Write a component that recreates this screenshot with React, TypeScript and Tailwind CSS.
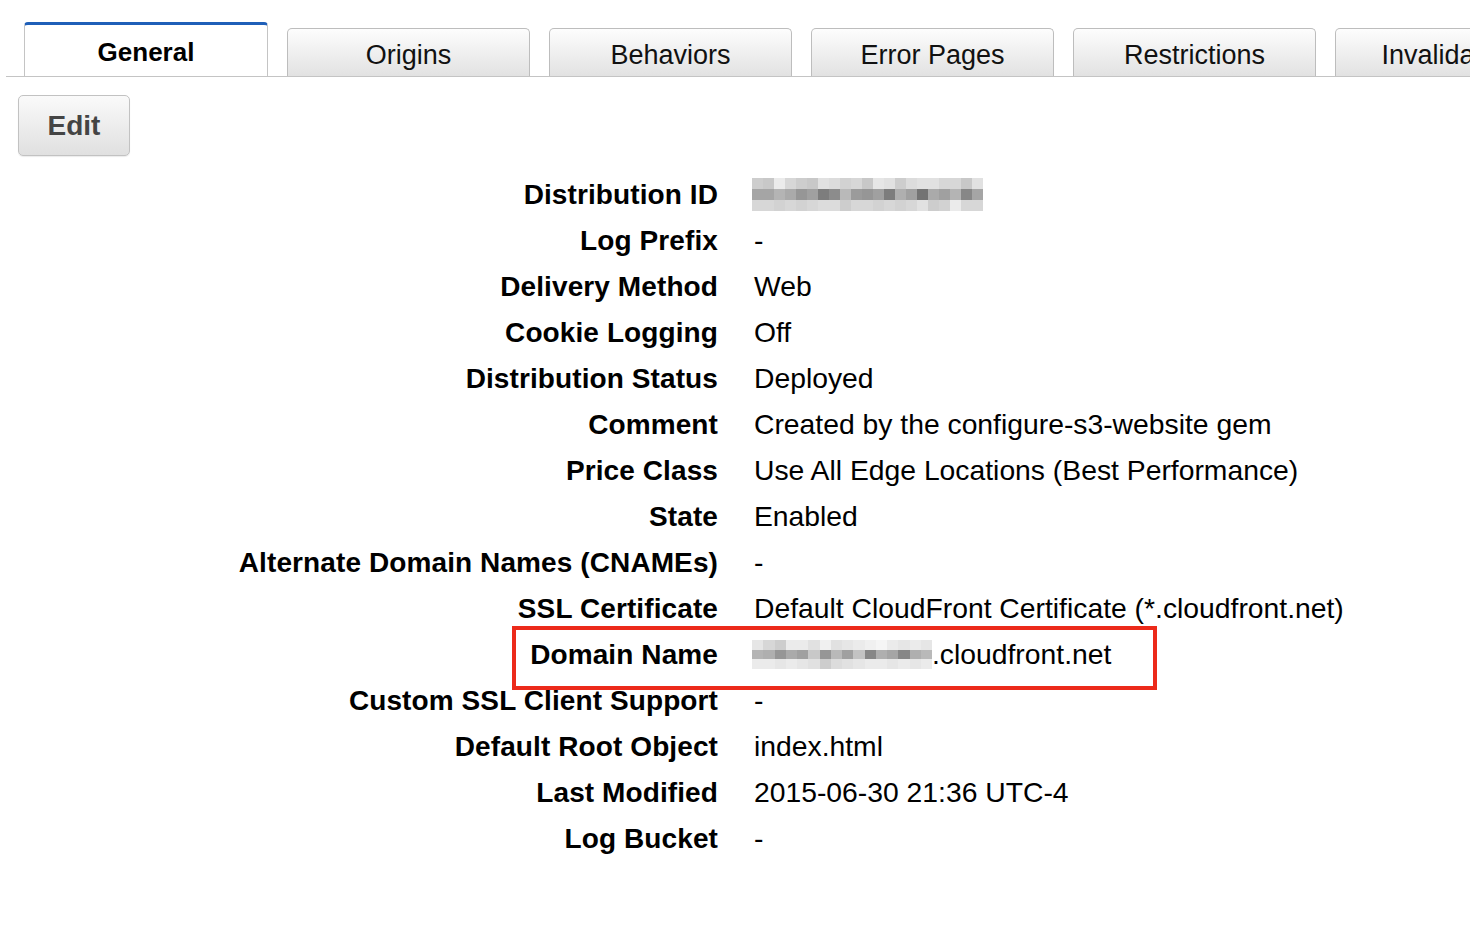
import React from "react";

const tabs = ["Origins", "Behaviors", "Error Pages", "Restrictions", "Invalidations"];

const rows: { label: string; value: string; highlight?: boolean }[] = [
  { label: "Distribution ID", value: "blurId" },
  { label: "Log Prefix", value: "-" },
  { label: "Delivery Method", value: "Web" },
  { label: "Cookie Logging", value: "Off" },
  { label: "Distribution Status", value: "Deployed" },
  { label: "Comment", value: "Created by the configure-s3-website gem" },
  { label: "Price Class", value: "Use All Edge Locations (Best Performance)" },
  { label: "State", value: "Enabled" },
  { label: "Alternate Domain Names (CNAMEs)", value: "-" },
  { label: "SSL Certificate", value: "Default CloudFront Certificate (*.cloudfront.net)" },
  { label: "Domain Name", value: "domain", highlight: true },
  { label: "Custom SSL Client Support", value: "-" },
  { label: "Default Root Object", value: "index.html" },
  { label: "Last Modified", value: "2015-06-30 21:36 UTC-4" },
  { label: "Log Bucket", value: "-" },
];

// pixelated blur, rows of gray levels
const idShades = [
  [205, 200, 235, 215, 205, 200, 225, 220, 210, 215, 200, 230, 225, 205, 220, 225, 225, 215, 215, 200, 225],
  [165, 165, 180, 170, 150, 160, 125, 140, 185, 155, 150, 160, 125, 175, 160, 115, 170, 160, 180, 135, 165],
  [215, 215, 210, 215, 210, 215, 220, 220, 205, 215, 215, 210, 215, 210, 215, 225, 205, 210, 235, 215, 215],
];

const domainShades = [
  [230, 215, 205, 235, 235, 225, 240, 225, 230, 235, 240, 245, 235, 230, 235, 230],
  [180, 175, 150, 170, 160, 200, 150, 185, 160, 195, 135, 175, 165, 135, 175, 185],
  [235, 235, 230, 235, 230, 225, 205, 220, 225, 230, 235, 235, 230, 235, 230, 235],
];

function Pixels({ shades, w, h }: { shades: number[][]; w: number; h: number }) {
  const cols = shades[0].length;
  return (
    <svg width={cols * w} height={shades.length * h} className="block" shapeRendering="crispEdges">
      {shades.map((r, y) =>
        r.map((v, x) => (
          <rect key={`${x}-${y}`} x={x * w} y={y * h} width={w + 0.5} height={h + 0.5} fill={`rgb(${v},${v},${v})`} />
        ))
      )}
    </svg>
  );
}

function Row({ label, value }: { label: string; value: string }) {
  return (
    <div className="flex h-[46px] items-center text-black">
      <div className="w-[566px] shrink-0 text-right font-bold leading-none text-[28px] tracking-[0.1px]">{label}</div>
      <div className="pl-[36px] leading-none text-[28.3px] whitespace-nowrap -mt-[1px]">
        {value === "blurId" ? (
          <div className="-ml-[2px]">
            <Pixels shades={idShades} w={11} h={11} />
          </div>
        ) : value === "domain" ? (
          <div className="flex items-center">
            <div className="-ml-[2px]">
              <Pixels shades={domainShades} w={11.25} h={9.5} />
            </div>
            <span>.cloudfront.net</span>
          </div>
        ) : (
          value
        )}
      </div>
    </div>
  );
}

export default function App() {
  return (
    <div className="w-[1470px] h-[932px] bg-white overflow-hidden" style={{ fontFamily: '"Liberation Sans", Arial, sans-serif' }}>
      <div className="flex items-end h-[77px] ml-[6px] pl-[18px] border-b border-[#c4c4c4] gap-[19px] pt-[22px] overflow-hidden">
        <div className="w-[244px] h-[55px] shrink-0 bg-white border-t-[3px] border-t-[#1f5fb8] border-x border-x-[#c4c4c4] rounded-t-[4px] -mb-px flex items-center justify-center text-[26px] font-bold text-black pt-[2px]">
          General
        </div>
        {tabs.map((t) => (
          <div
            key={t}
            className="w-[243px] h-[48px] shrink-0 bg-gradient-to-b from-[#fdfdfd] to-[#e2e2e2] border border-b-0 border-[#bdbdbd] rounded-t-[5px] flex items-center justify-center text-[27px] text-[#111] pt-[5px] overflow-hidden whitespace-nowrap"
          >
            {t}
          </div>
        ))}
      </div>

      <div className="pt-[18px] pl-[18px]">
        <button className="w-[112px] h-[61px] rounded-[5px] border border-[#c2c2c2] bg-gradient-to-b from-[#fafafa] to-[#e0e0e0] text-[28px] font-bold text-[#444] shadow-[0_1px_1px_rgba(0,0,0,0.08)]">
          Edit
        </button>
      </div>

      <div className="pt-[16px] pl-[152px]">
        {rows.map((r) =>
          r.highlight ? (
            <div key={r.label} className="relative">
              <Row label={r.label} value={r.value} />
              <div className="absolute left-[360px] top-[-6px] w-[645px] h-[64px] border-[4px] border-[#ec2a1a] pointer-events-none" />
            </div>
          ) : (
            <Row key={r.label} label={r.label} value={r.value} />
          )
        )}
      </div>
    </div>
  );
}
